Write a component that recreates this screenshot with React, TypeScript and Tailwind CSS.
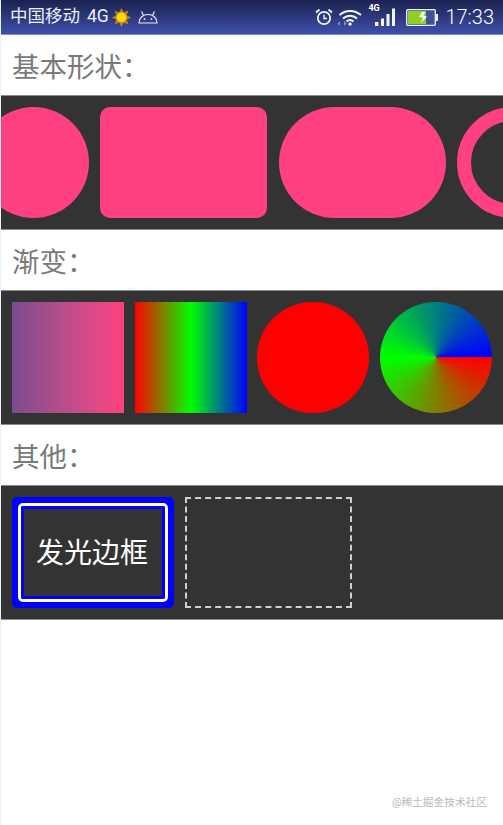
const CJK = "font-['Roboto','Noto_Sans_CJK_SC',sans-serif]";

function SunIcon() {
  const rays = [0, 45, 90, 135, 180, 225, 270, 315];
  return (
    <svg width="19" height="19" viewBox="0 0 19 19">
      {rays.map((a) => (
        <path key={a} d="M9.5 0 L11.6 4.4 L7.4 4.4 Z" fill="#c98a1c" transform={`rotate(${a} 9.5 9.5)`} />
      ))}
      <circle cx="9.5" cy="9.5" r="6.2" fill="#b9791a" />
      <circle cx="9.5" cy="9.5" r="5" fill="#ffd800" />
    </svg>
  );
}

function AndroidIcon() {
  return (
    <svg width="20" height="16" viewBox="0 0 20 16" fill="none" stroke="#e8ebf6" strokeWidth="1.2">
      <path d="M1 14 C1 8.5 5 5.5 10 5.5 C15 5.5 19 8.5 19 14 Z" />
      <path d="M5.5 6.5 L3.5 2.5 M14.5 6.5 L16.5 2.5" />
      <circle cx="6.5" cy="10" r="0.9" fill="#e8ebf6" stroke="none" />
      <circle cx="13.5" cy="10" r="0.9" fill="#e8ebf6" stroke="none" />
    </svg>
  );
}

function AlarmIcon() {
  return (
    <svg width="18" height="18" viewBox="0 0 18 18" fill="none" stroke="#f4f5fb">
      <circle cx="9" cy="10" r="6.2" strokeWidth="1.7" />
      <path d="M9 6.5 V10.5 H12" strokeWidth="1.3" />
      <path d="M1 4.5 L4.5 1.5 M17 4.5 L13.5 1.5" strokeWidth="1.8" />
    </svg>
  );
}

function WifiIcon() {
  return (
    <svg width="26" height="19" viewBox="0 0 26 19" fill="none" stroke="#f4f5fb" strokeWidth="2">
      <path d="M3.5 7 C9.5 1.5 18.5 1.5 25 7" />
      <path d="M7 10.5 C11 6.8 17 6.8 21 10.5" />
      <path d="M10.5 13.5 C12.8 11.6 15.2 11.6 17.5 13.5" />
      <circle cx="14" cy="16" r="1.7" fill="#f4f5fb" stroke="none" />
      <path d="M4 13 L1.5 15.5 L4 18 Z M8 12.5 L10.5 15.5 L8 18 Z" fill="#aeb6d8" stroke="none" opacity="0.7" />
    </svg>
  );
}

function SignalIcon() {
  return (
    <svg width="28" height="20" viewBox="0 0 28 20" fill="#f4f5fb">
      <rect x="7" y="15" width="3.4" height="4" />
      <rect x="13" y="11.5" width="3" height="7.5" />
      <rect x="18.5" y="7" width="3" height="12" />
      <rect x="24" y="1.5" width="3" height="17.5" />
    </svg>
  );
}

function BatteryIcon() {
  return (
    <svg width="32" height="17" viewBox="0 0 32 17">
      <rect x="0.7" y="0.7" width="28.6" height="15.6" fill="#3f4f9c" stroke="#eef0f8" strokeWidth="1.3" rx="1" />
      <rect x="2" y="2" width="18" height="13" fill="#8ed024" />
      <rect x="30" y="5" width="2" height="7" fill="#eef0f8" />
      <path d="M16 3 L13 8 L17 8.5 L15 14 L21 7.5 L17.5 7 L19 3 Z" fill="#ffffff" />
    </svg>
  );
}

function StatusBar() {
  return (
    <div className="flex h-[35px] items-center justify-between border-b border-[#7f8fd8] bg-gradient-to-b from-[#1b2250] to-[#3f50ab] px-[9px] text-[#eef0f8]">
      <div className="flex items-center">
        <span className={`${CJK} text-[17.5px] leading-none`}>中国移动</span>
        <span className="ml-[7px] font-['Roboto',sans-serif] text-[17.5px] leading-none">4G</span>
        <span className="ml-[3px]">
          <SunIcon />
        </span>
        <span className="ml-[7px]">
          <AndroidIcon />
        </span>
      </div>
      <div className="flex items-center">
        <AlarmIcon />
        <span className="ml-[3px]">
          <WifiIcon />
        </span>
        <span className="relative ml-[6px]">
          <SignalIcon />
          <span className="absolute top-[-3px] left-0 font-['Roboto',sans-serif] text-[9px] leading-none font-bold text-white">
            4G
          </span>
        </span>
        <span className="ml-[10px]">
          <BatteryIcon />
        </span>
        <span className="ml-[7px] font-['Roboto',sans-serif] text-[20px] leading-none font-light text-white">17:33</span>
      </div>
    </div>
  );
}

function Heading({ children }: { children: string }) {
  return (
    <div className={`${CJK} flex h-[60px] items-center pt-[6px] pl-[11px] text-[27.5px] text-[#7a7a7a]`}>
      {children}
    </div>
  );
}

function Row({ children }: { children: React.ReactNode }) {
  return (
    <div className="flex h-[135px] items-center gap-[11px] overflow-hidden border-y border-[#8a8a8a] bg-[#333333] pl-[11px]">
      {children}
    </div>
  );
}

export default function App() {
  return (
    <div className="relative h-[825px] overflow-hidden bg-[#eef3ff] pl-px">
      <div className="h-full bg-white">
        <StatusBar />
        <Heading>基本形状：</Heading>
        <Row>
          <div className="-ml-[34px] h-[111px] w-[111px] shrink-0 rounded-full bg-[#ff4081]" />
          <div className="h-[111px] w-[167px] shrink-0 rounded-[10px] bg-[#ff4081]" />
          <div className="ml-px h-[111px] w-[167px] shrink-0 rounded-full bg-[#ff4081]" />
          <div className="h-[111px] w-[111px] shrink-0 rounded-full border-[14px] border-[#ff4081]" />
        </Row>
        <Heading>渐变：</Heading>
        <Row>
          <div className="h-[111px] w-[112px] shrink-0 bg-gradient-to-r from-[#7b4a8f] to-[#ff4081]" />
          <div className="h-[111px] w-[112px] shrink-0 bg-[linear-gradient(to_right,#ff0000,#00ff00,#0000ff)]" />
          <div className="-ml-px h-[111px] w-[112px] shrink-0 rounded-full bg-[#ff0000]" />
          <div className="h-[111px] w-[112px] shrink-0 rounded-full bg-[conic-gradient(from_90deg,#ff0000,#00ff00,#0000ff)]" />
        </Row>
        <Heading>其他：</Heading>
        <Row>
          <div className="h-[111px] w-[162px] shrink-0 rounded-[5px] bg-[#0000ff] p-[6px]">
            <div className="h-full rounded-[5px] border-[3px] border-white">
              <div className={`${CJK} flex h-full items-center justify-center rounded-[2px] border-[3px] border-[#0000ff] bg-[#333333] pt-[2px] pr-[2px] text-[28px] text-white`}>
                发光边框
              </div>
            </div>
          </div>
          <div className="h-[111px] w-[167px] shrink-0 border-2 border-dashed border-[#d0d0d0]" />
        </Row>
      </div>
      <span className={`${CJK} absolute top-[796px] right-[16px] text-[10.7px] leading-[14px] text-[#bbbbbb]`}>
        @稀土掘金技术社区
      </span>
    </div>
  );
}
